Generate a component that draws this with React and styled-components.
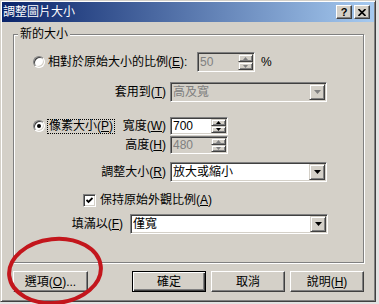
import React from "react";
import styled, { createGlobalStyle } from "styled-components";

const GlobalStyle = createGlobalStyle`
  html, body {
    margin: 0;
    padding: 0;
    background: #e2e2e2;
  }
  body {
    font-family: "Liberation Sans", "Noto Sans CJK TC", sans-serif;
    font-size: 12px;
    color: #000;
  }
`;

const Stage = styled.div`
  position: relative;
  width: 379px;
  height: 304px;
  overflow: hidden;
`;

const Window = styled.div`
  width: 376px;
  height: 302px;
  box-sizing: border-box;
  background: #d4d0c8;
  border: 1px solid;
  border-color: #d4d0c8 #404040 #404040 #d4d0c8;
  box-shadow: inset 1px 1px #fff, inset -1px -1px #808080;
  padding: 1px;
  display: flex;
  flex-direction: column;
`;

const TitleBar = styled.div`
  height: 20px;
  flex: none;
  display: flex;
  align-items: center;
  padding: 0 4px 0 1px;
  background: linear-gradient(to right, #0a246a, #a6caf0);
`;

const Title = styled.span`
  color: #fff;
  font-size: 12px;
  line-height: 14px;
`;

const CaptionButtons = styled.div`
  margin-left: auto;
  display: flex;
  gap: 2px;
`;

const CaptionButton = styled.div`
  width: 16px;
  height: 14px;
  box-sizing: border-box;
  background: #d4d0c8;
  border: 1px solid;
  border-color: #fff #404040 #404040 #fff;
  box-shadow: inset -1px -1px #808080;
  display: flex;
  align-items: center;
  justify-content: center;
  font-weight: bold;
  font-size: 11px;
  line-height: 11px;
`;

const Body = styled.div`
  padding: 12px 0 0 11px;
`;

const GroupBox = styled.div`
  width: 351px;
  height: 229px;
  box-sizing: border-box;
  border: 1px solid #808080;
  box-shadow: inset 1px 1px #fff, 1px 1px #fff;
`;

const Legend = styled.div`
  width: fit-content;
  height: 14px;
  line-height: 14px;
  margin: -8px 0 0 4px;
  padding: 0 2px;
  background: #d4d0c8;
`;

const Row = styled.div`
  display: flex;
  align-items: center;
  height: ${(p) => p.$h}px;
  margin-top: ${(p) => p.$top}px;
  padding-left: ${(p) => p.$indent || 0}px;
  line-height: 14px;
  white-space: nowrap;
`;

const LabelCell = styled.div`
  width: ${(p) => p.$width}px;
  box-sizing: border-box;
  padding-left: ${(p) => p.$indent || 0}px;
  display: flex;
  align-items: center;
  justify-content: ${(p) => (p.$spread ? "space-between" : "flex-end")};
`;

const Key = styled.u`
  text-decoration: underline;
`;

const RadioMark = styled.span`
  width: 12px;
  height: 12px;
  flex: none;
  box-sizing: border-box;
  border-radius: 50%;
  border: 1px solid;
  border-color: #808080 #fff #fff #808080;
  box-shadow: inset 1px 1px #404040, inset -1px -1px #d4d0c8;
  background: #fff;
  display: flex;
  align-items: center;
  justify-content: center;

  &::after {
    content: "";
    width: 4px;
    height: 4px;
    border-radius: 50%;
    background: ${(p) => (p.$checked ? "#000" : "transparent")};
  }
`;

const OptionText = styled.span`
  margin-left: 3px;
  width: ${(p) => (p.$width ? `${p.$width}px` : "auto")};
`;

const FocusText = styled.span`
  margin-left: 2px;
  padding: 0 1px;
  border: 1px dotted #000;
  line-height: 13px;
`;

const Field = styled.div`
  width: ${(p) => p.$width}px;
  height: 100%;
  margin-left: ${(p) => p.$gap || 0}px;
  box-sizing: border-box;
  border: 1px solid;
  border-color: #808080 #fff #fff #808080;
  box-shadow: inset 1px 1px #404040, inset -1px -1px #d4d0c8;
  background: ${(p) => (p.$disabled ? "#d4d0c8" : "#fff")};
  color: ${(p) => (p.$disabled ? "#808080" : "#000")};
  padding: 1px 1px 1px 2px;
  display: flex;
  align-items: center;
`;

const FieldText = styled.span`
  flex: 1;
  overflow: hidden;
`;

const Raised = styled.div`
  box-sizing: border-box;
  background: #d4d0c8;
  border: 1px solid;
  border-color: #d4d0c8 #404040 #404040 #d4d0c8;
  box-shadow: inset 1px 1px #fff, inset -1px -1px #808080;
  display: flex;
  align-items: center;
  justify-content: center;
`;

const DropButton = styled(Raised)`
  width: 16px;
  height: 100%;
`;

const Spin = styled.div`
  width: 15px;
  height: 100%;
  display: flex;
  flex-direction: column;
`;

const SpinHalf = styled(Raised)`
  flex: 1;
`;

const Unit = styled.span`
  margin-left: 6px;
`;

const CheckMark = styled.span`
  width: 13px;
  height: 13px;
  flex: none;
  box-sizing: border-box;
  border: 1px solid;
  border-color: #808080 #fff #fff #808080;
  box-shadow: inset 1px 1px #404040, inset -1px -1px #d4d0c8;
  background: #fff;
  display: flex;
  align-items: center;
  justify-content: center;
`;

const CheckText = styled.span`
  margin-left: 4px;
`;

const ButtonRow = styled.div`
  width: 351px;
  margin-top: 8px;
  display: flex;
`;

const ButtonGroup = styled.div`
  margin-left: auto;
  display: flex;
  gap: 5px;
`;

const PushButton = styled.div`
  width: ${(p) => p.$width || 74}px;
  height: 21px;
  box-sizing: border-box;
  background: #d4d0c8;
  border: 1px solid;
  border-color: ${(p) => (p.$default ? "#000" : "#fff #404040 #404040 #fff")};
  box-shadow: ${(p) =>
    p.$default
      ? "inset 1px 1px #fff, inset -1px -1px #404040, inset -2px -2px #808080"
      : "inset -1px -1px #808080"};
  display: flex;
  align-items: center;
  justify-content: center;
  line-height: 14px;
`;

const Highlight = styled.svg`
  position: absolute;
  left: 0;
  top: 0;
  pointer-events: none;
`;

const DownArrow = ({ color = "#000" }) => (
  <svg width="7" height="4" viewBox="0 0 7 4">
    <polygon points="0,0 7,0 3.5,4" fill={color} />
  </svg>
);

const SpinArrow = ({ up, color = "#000" }) => (
  <svg width="5" height="3" viewBox="0 0 5 3">
    <polygon points={up ? "0,3 5,3 2.5,0" : "0,0 5,0 2.5,3"} fill={color} />
  </svg>
);

const SpinBox = ({ disabled }) => {
  const c = disabled ? "#808080" : "#000";
  return (
    <Spin>
      <SpinHalf>
        <SpinArrow up color={c} />
      </SpinHalf>
      <SpinHalf>
        <SpinArrow color={c} />
      </SpinHalf>
    </Spin>
  );
};

const App = () => {
  return (
    <Stage>
      <GlobalStyle />
      <Window>
        <TitleBar>
          <Title>調整圖片大小</Title>
          <CaptionButtons>
            <CaptionButton>?</CaptionButton>
            <CaptionButton>
              <svg width="8" height="7" viewBox="0 0 8 7">
                <path d="M0.5 0 L7.5 7 M7.5 0 L0.5 7" stroke="#000" strokeWidth="1.6" />
              </svg>
            </CaptionButton>
          </CaptionButtons>
        </TitleBar>

        <Body>
          <GroupBox>
            <Legend>新的大小</Legend>

            {/* 比例 */}
            <Row $h={20} $top={11} $indent={19}>
              <RadioMark />
              <OptionText $width={149}>
                相對於原始大小的比例(<Key>E</Key>):
              </OptionText>
              <Field $width={58} $disabled>
                <FieldText>50</FieldText>
                <SpinBox disabled />
              </Field>
              <Unit>%</Unit>
            </Row>

            <Row $h={20} $top={10}>
              <LabelCell $width={152}>
                套用到(<Key>T</Key>)
              </LabelCell>
              <Field $width={157} $gap={4} $disabled>
                <FieldText>高及寬</FieldText>
                <DropButton>
                  <DownArrow color="#808080" />
                </DropButton>
              </Field>
            </Row>

            {/* 像素 */}
            <Row $h={18} $top={15}>
              <LabelCell $width={152} $indent={19} $spread>
                <RadioMark $checked />
                <FocusText>
                  像素大小(<Key>P</Key>)
                </FocusText>
                <span style={{ marginLeft: "auto" }}>
                  寬度(<Key>W</Key>)
                </span>
              </LabelCell>
              <Field $width={58} $gap={4}>
                <FieldText>700</FieldText>
                <SpinBox />
              </Field>
            </Row>

            <Row $h={18} $top={1}>
              <LabelCell $width={152}>
                高度(<Key>H</Key>)
              </LabelCell>
              <Field $width={58} $gap={4} $disabled>
                <FieldText>480</FieldText>
                <SpinBox disabled />
              </Field>
            </Row>

            <Row $h={20} $top={8}>
              <LabelCell $width={152}>
                調整大小(<Key>R</Key>)
              </LabelCell>
              <Field $width={157} $gap={4}>
                <FieldText>放大或縮小</FieldText>
                <DropButton>
                  <DownArrow />
                </DropButton>
              </Field>
            </Row>

            <Row $h={14} $top={11} $indent={69}>
              <CheckMark>
                <svg width="7" height="7" viewBox="0 0 7 7">
                  <polyline points="0.5,3 2.5,5 6.5,1" fill="none" stroke="#000" strokeWidth="1.8" />
                </svg>
              </CheckMark>
              <CheckText>
                保持原始外觀比例(<Key>A</Key>)
              </CheckText>
            </Row>

            <Row $h={20} $top={7}>
              <LabelCell $width={109}>
                填滿以(<Key>F</Key>)
              </LabelCell>
              <Field $width={198} $gap={7}>
                <FieldText>僅寬</FieldText>
                <DropButton>
                  <DownArrow />
                </DropButton>
              </Field>
            </Row>
          </GroupBox>

          <ButtonRow>
            <PushButton $width={75}>
              選項(<Key>O</Key>)...
            </PushButton>
            <ButtonGroup>
              <PushButton $default>確定</PushButton>
              <PushButton>取消</PushButton>
              <PushButton>
                說明(<Key>H</Key>)
              </PushButton>
            </ButtonGroup>
          </ButtonRow>
        </Body>
      </Window>

      <Highlight width="379" height="304" viewBox="0 0 379 304">
        <ellipse
          cx="55"
          cy="271"
          rx="46"
          ry="32"
          transform="rotate(-6 55 271)"
          fill="none"
          stroke="#c3161c"
          strokeWidth="4"
        />
      </Highlight>
    </Stage>
  );
};

export default App;
